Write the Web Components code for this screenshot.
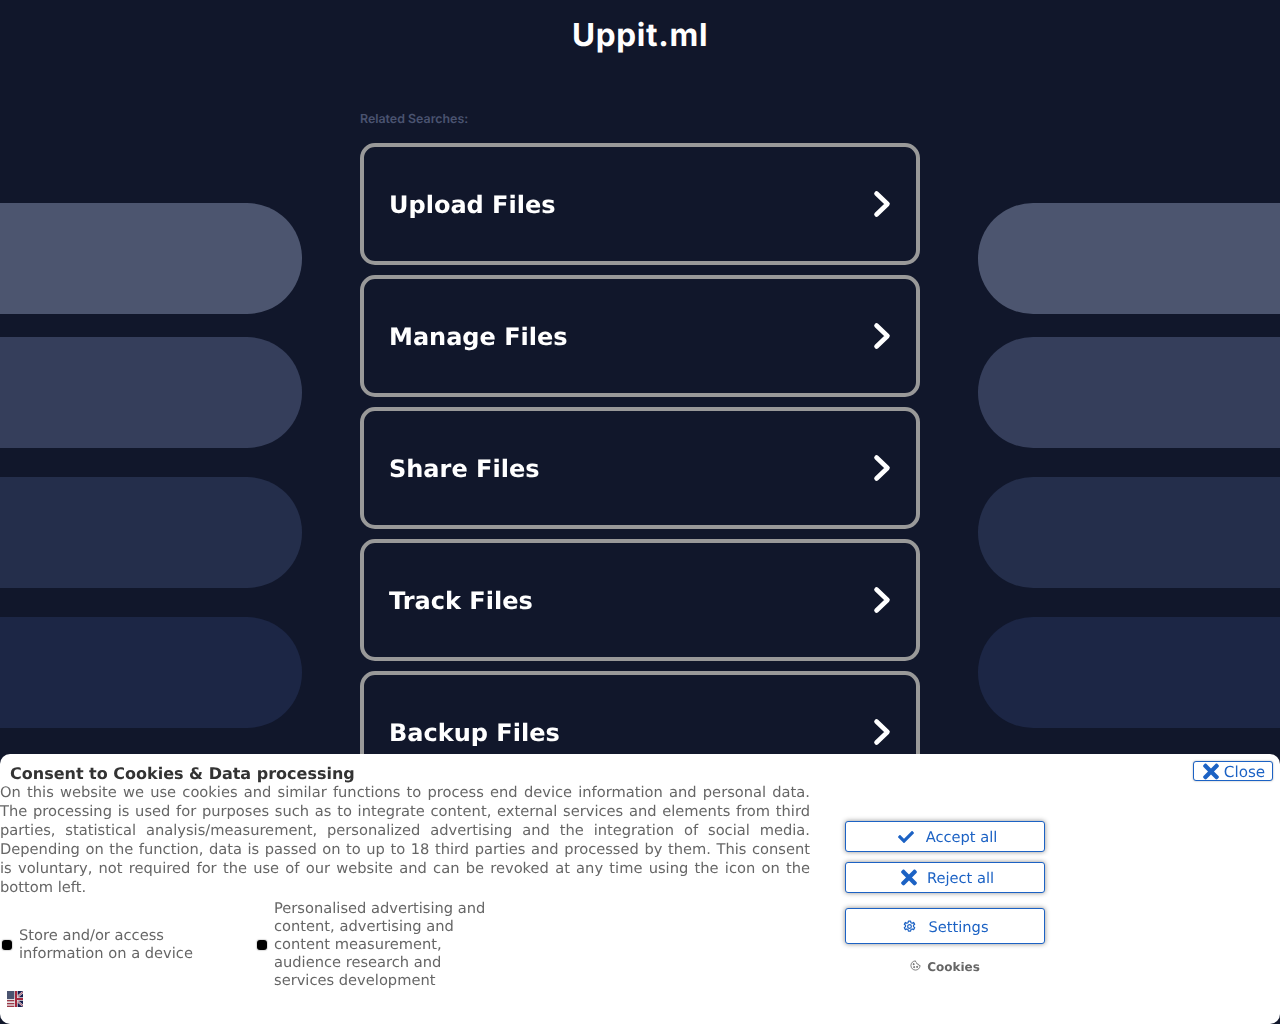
<!DOCTYPE html>
<html>
<head>
<meta charset="utf-8">
<title>Uppit.ml</title>
<style>
html, body { margin: 0; padding: 0; height: 1024px; overflow: hidden; background: #11172b; font-family: "DejaVu Sans", sans-serif; text-rendering: geometricPrecision; }
</style>
</head>
<body>
<park-page></park-page>
<consent-banner></consent-banner>

<script>
const ICONS = {
    times: `<svg viewBox="0 0 352 512" fill="currentColor"><path d="M242.72 256l100.07-100.07c12.28-12.28 12.28-32.19 0-44.48l-22.24-22.24c-12.28-12.28-32.19-12.28-44.48 0L176 189.28 75.93 89.21c-12.28-12.28-32.19-12.28-44.48 0L9.21 111.45c-12.28 12.28-12.28 32.19 0 44.48L109.28 256 9.21 356.07c-12.28 12.28-12.28 32.19 0 44.48l22.24 22.24c12.28 12.28 32.2 12.28 44.48 0L176 322.72l100.07 100.07c12.28 12.28 32.2 12.28 44.48 0l22.24-22.24c12.28-12.28 12.28-32.19 0-44.48L242.72 256z"/></svg>`,
    check: `<svg viewBox="0 0 512 512" fill="currentColor"><path d="M173.898 439.404l-166.4-166.4c-9.997-9.997-9.997-26.206 0-36.204l36.203-36.204c9.997-9.998 26.207-9.998 36.204 0L192 312.69 432.095 72.596c9.997-9.997 26.207-9.997 36.204 0l36.203 36.204c9.997 9.997 9.997 26.206 0 36.204l-294.4 294.401c-9.998 9.997-26.207 9.997-36.204-.001z"/></svg>`,
    cog: `<svg viewBox="0 0 24 24" fill="none" stroke="currentColor" stroke-width="2.2" stroke-linejoin="round"><circle cx="12" cy="12" r="3.4"/><path d="M10 2h4l.6 3 2.3 1 2.6-1.6 2.1 3.4-2.3 2 .1 2.4 2.2 2-2 3.5-2.7-1.2-2.2 1.2-.7 2.8h-4l-.7-2.8-2.2-1.2-2.7 1.2-2-3.5 2.2-2 .1-2.4-2.3-2 2.1-3.4L7.100 6l2.300-1z"/></svg>`,
    cookie: `<svg viewBox="0 0 24 24" fill="none" stroke="currentColor" stroke-width="1.8"><path d="M12 2a10 10 0 1 0 10 10 3.500 3.500 0 0 1-4-3 3.500 3.500 0 0 1-4-3.500A3.500 3.500 0 0 1 12 2z"/><circle cx="8" cy="9" r="1.300" fill="currentColor"/><circle cx="9" cy="15.500" r="1.300" fill="currentColor"/><circle cx="15.500" cy="15" r="1.300" fill="currentColor"/></svg>`
};

class ParkPage extends HTMLElement {
    constructor() {
        super();
        this.attachShadow({mode: "open"});
    }
    connectedCallback() {
        const pills = ["#4c556f", "#353e5b", "#242e4b", "#1c2645"];
        const gaps = [203, 23, 29, 29];
        const col = side => `<div class="side ${side}">${pills.map((c, i) =>
            `<div class="pill" style="background:${c};margin-top:${gaps[i]}px"></div>`).join("")}</div>`;
        const terms = ["Upload Files", "Manage Files", "Share Files", "Track Files", "Backup Files"];
        this.shadowRoot.innerHTML = `
        <style>
        :host{
            display: grid;
            grid-template-columns: 302px 1fr 302px;
            height: 1024px;
            overflow: hidden;
            background: #11172b;
        }
        .pill{
            height: 111px;
        }
        .left .pill{
            border-radius: 0 55px 55px 0;
        }
        .right .pill{
            border-radius: 55px 0 0 55px;
        }
        main{
            padding: 0 58px;
        }
        h1{
            margin: 0;
            height: 70px;
            line-height: 70px;
            text-align: center;
            font-family: "Inter", sans-serif;
            font-size: 31.5px;
            letter-spacing: .7px;
            font-weight: 700;
            color: #fff;
        }
        .related{
            margin: 41px 0 16px;
            height: 16px;
            font: 600 12.4px/16px "Inter", sans-serif;
            color: #4a5370;
        }
        .list{
            display: flex;
            flex-direction: column;
            gap: 10px;
        }
        </style>
        ${col("left")}
        <main>
            <h1>Uppit.ml</h1>
            <div class="related">Related Searches:</div>
            <div class="list">${terms.map(t => `<search-link>${t}</search-link>`).join("")}</div>
        </main>
        ${col("right")}`;
    }
}

class SearchLink extends HTMLElement {
    constructor() {
        super();
        this.attachShadow({mode: "open"});
        this.shadowRoot.innerHTML = `
        <style>
        :host{
            display: flex;
            align-items: center;
            justify-content: space-between;
            box-sizing: border-box;
            height: 122px;
            padding: 0 24px 0 25px;
            border: 4px solid #999;
            border-radius: 15px;
            color: #fff;
            font-size: 24px;
            line-height: 30px;
            font-weight: 700;
            will-change: opacity;
        }
        span{
            padding-top: 2px;
        }
        svg{
            width: 20px;
            height: 30px;
            display: block;
        }
        </style>
        <span><slot></slot></span>
        <svg viewBox="0 0 20 30" fill="none" stroke="#fff" stroke-width="4.600" stroke-linecap="round" stroke-linejoin="round"><polyline points="4.500,4.500 15.500,15 4.500,25.500"/></svg>`;
    }
}

class ConsentButton extends HTMLElement {
    constructor() {
        super();
        this.attachShadow({mode: "open"});
    }
    connectedCallback() {
        const icon = this.getAttribute("icon");
        const w = this.getAttribute("w") || 15;
        const h = this.getAttribute("h") || w;
        const gap = this.getAttribute("gap") || 12;
        const shift = this.getAttribute("shift") || 0;
        this.shadowRoot.innerHTML = `
        <style>
        :host{
            display: flex;
            align-items: center;
            justify-content: center;
            gap: ${gap}px;
            box-sizing: border-box;
            height: 31px;
            padding-left: ${shift}px;
            border: 1px solid #1c62c4;
            border-radius: 3px;
            background: #fff;
            color: #1c62c4;
            font-size: 14.667px;
            box-shadow: 0 0 5px rgba(0,0,0,.45);
        }
        .icon{
            display: block;
            flex: none;
            width: ${w}px;
            height: ${h}px;
        }
        svg{
            display: block;
            width: 100%;
            height: 100%;
        }
        .label{
            padding-top: var(--label-top, 1px);
        }
        </style>
        <span class="icon">${ICONS[icon]}</span><span class="label"><slot></slot></span>`;
    }
}

class ConsentItem extends HTMLElement {
    constructor() {
        super();
        this.attachShadow({mode: "open"});
        this.shadowRoot.innerHTML = `
        <style>
        :host{
            display: flex;
            align-items: center;
            gap: 7px;
            font-size: 14.667px;
            line-height: 18px;
            color: #666;
        }
        i{
            flex: none;
            width: 10px;
            height: 10px;
            margin-left: 2px;
            border-radius: 3px;
            background: #000;
            box-shadow: 0 0 1px 1px #ddd;
        }
        </style>
        <i></i><span><slot></slot></span>`;
    }
}

class ConsentBanner extends HTMLElement {
    constructor() {
        super();
        this.attachShadow({mode: "open"});
        this.shadowRoot.innerHTML = `
        <style>
        :host{
            display: grid;
            grid-template-columns: 810px 200px;
            column-gap: 35px;
            position: fixed;
            left: 0;
            right: 0;
            bottom: 0;
            box-sizing: border-box;
            height: 270px;
            background: #fff;
            border-radius: 10px;
            color: #666;
            will-change: transform;
        }
        h2{
            margin: 0;
            padding: 10px 0 0 10px;
            font-size: 16px;
            line-height: 19px;
            font-weight: 700;
            color: #333;
        }
        p{
            margin: 0;
            font-size: 14.667px;
            line-height: 19px;
            text-align: justify;
        }
        .items{
            display: grid;
            grid-template-columns: 255px 240px;
            align-items: center;
            margin-top: 3px;
        }
        .flag{
            display: block;
            width: 16px;
            height: 16px;
            margin: 1px 0 0 7px;
        }
        .actions{
            display: flex;
            flex-direction: column;
            padding-top: 67px;
        }
        .actions consent-button + consent-button{
            margin-top: 10px;
        }
        .actions .settings{
            height: 36px;
            margin-top: 15px;
            --label-top: 3px;
        }
        .cookies{
            display: flex;
            justify-content: center;
            align-items: center;
            gap: 6px;
            margin-top: 15px;
            font-size: 12px;
            font-weight: 700;
            line-height: 16px;
            color: #666;
        }
        .cookies svg{
            width: 11px;
            height: 11px;
            display: block;
            margin-top: -3px;
        }
        .close{
            position: absolute;
            top: 7px;
            right: 7px;
            width: 80px;
            height: 20px;
            font-size: 15.2px;
            box-shadow: 0 0 2px rgba(0,0,0,.35);
        }
        </style>
        <div class="text">
            <h2>Consent to Cookies &amp; Data processing</h2>
            <p>On this website we use cookies and similar functions to process end device information and personal data. The processing is used for purposes such as to integrate content, external services and elements from third parties, statistical analysis/measurement, personalized advertising and the integration of social media. Depending on the function, data is passed on to up to 18 third parties and processed by them. This consent is&nbsp;voluntary, not required for the use of our website and can be revoked at any time using the icon on the bottom left.</p>
            <div class="items">
                <consent-item>Store and/or access<br>information on a device</consent-item>
                <consent-item>Personalised advertising and<br>content, advertising and<br>content measurement,<br>audience research and<br>services development</consent-item>
            </div>
            <svg class="flag" viewBox="0 0 16 16">
                <rect width="8" height="16" fill="#e4dfe2"/>
                <g fill="#9c3a48"><rect y="9" width="8" height="1.300"/><rect y="12" width="8" height="1.300"/><rect y="14.700" width="8" height="1.300"/></g>
                <rect width="8" height="8" fill="#4a5470"/>
                <rect x="8" width="8" height="16" fill="#161d4d"/>
                <path d="M8 8L16 1M8 8L16 15" stroke="#d9d3da" stroke-width="2.200"/>
                <path d="M8 8L16 1M8 8L16 15" stroke="#a03048" stroke-width=".8"/>
                <path d="M8 8H16M9 0V16" stroke="#e4dfe2" stroke-width="3.400"/>
                <path d="M8 8H16M9 0V16" stroke="#a3283e" stroke-width="2"/>
            </svg>
        </div>
        <div class="actions">
            <consent-button icon="check" w="16" gap="12" shift="5">Accept all</consent-button>
            <consent-button icon="times" w="16" h="23" gap="10" shift="5">Reject all</consent-button>
            <consent-button class="settings" icon="cog" w="13" gap="12" shift="2">Settings</consent-button>
            <div class="cookies">${ICONS.cookie}Cookies</div>
        </div>
        <consent-button class="close" icon="times" w="16" h="23" gap="5" shift="2">Close</consent-button>`;
    }
}

customElements.define("search-link", SearchLink);
customElements.define("park-page", ParkPage);
customElements.define("consent-button", ConsentButton);
customElements.define("consent-item", ConsentItem);
customElements.define("consent-banner", ConsentBanner);
</script>
</body>
</html>
